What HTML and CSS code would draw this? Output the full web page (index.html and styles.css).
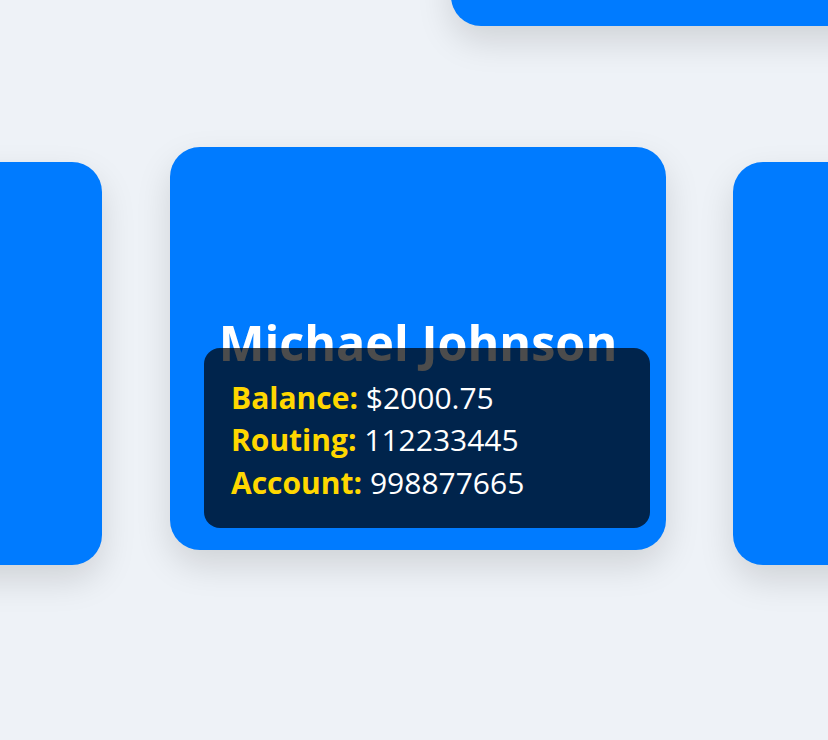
FILE: index.html
```html
<!DOCTYPE html>
<html lang="en">
<head>
<meta charset="utf-8">
<title>Accounts</title>
<link rel="stylesheet" href="styles.css">
</head>
<body>
  <div class="top-row">
    <div class="card"></div>
  </div>
  <div class="row">
    <div class="card side"></div>
    <div class="card active">
      <h2 class="name">Michael Johnson</h2>
      <div class="info">
        <p class="line"><strong>Balance:</strong> $2000.75</p>
        <p class="line"><strong>Routing:</strong> 112233445</p>
        <p class="line"><strong>Account:</strong> 998877665</p>
      </div>
    </div>
    <div class="card side"></div>
  </div>
</body>
</html>
```

FILE: styles.css
```css
html, body {
  margin: 0;
  padding: 0;
}
body {
  background: #eef2f7;
  height: 740px;
  overflow: hidden;
  font-family: "Open Sans", "Noto Sans", sans-serif;
}
.top-row {
  display: flex;
  padding-left: 451px;
  margin-top: -377px;
}
.row {
  display: flex;
  align-items: flex-start;
  margin-top: 121px;
  margin-left: -394px;
}
.card {
  flex: 0 0 496px;
  width: 496px;
  height: 403px;
  box-sizing: border-box;
  background: #007bff;
  border-radius: 30px;
  box-shadow: 0 15px 35px rgba(0, 0, 0, 0.13);
}
.card.side {
  margin-top: 15px;
}
.card.active {
  margin: 0 67px 0 68px;
  display: flex;
  flex-direction: column;
  justify-content: flex-end;
  padding: 0 34px 22px;
}
.name {
  margin: 0 -20px -24px;
  text-align: center;
  color: #ffffff;
  font-size: 48.5px;
  font-weight: 700;
  line-height: 60px;
  white-space: nowrap;
}
.info {
  position: relative;
  margin-right: -18px;
  background: rgba(0, 0, 0, 0.7);
  border-radius: 16px;
  padding: 29px 27px 24px;
}
.line {
  margin: 0;
  color: #ffffff;
  font-size: 30px;
  line-height: 42.5px;
}
.line strong {
  color: #ffd700;
  font-weight: 700;
}
```
